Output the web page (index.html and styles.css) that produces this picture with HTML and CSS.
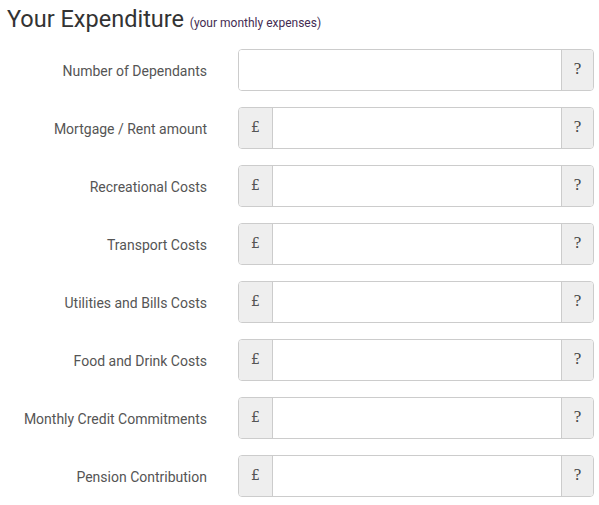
FILE: index.html
```html
<!DOCTYPE html>
<html>
<head>
<meta charset="utf-8">
<link rel="stylesheet" href="styles.css">
</head>
<body>
<div class="page">
  <h2 class="title">Your Expenditure <small class="sub">(your monthly expenses)</small></h2>
  <form class="form">
    <div class="row">
      <label class="label">Number of Dependants</label>
      <div class="group"><input class="field" type="text"><span class="addon help">?</span></div>
    </div>
    <div class="row">
      <label class="label">Mortgage / Rent amount</label>
      <div class="group"><span class="addon cur">£</span><input class="field" type="text"><span class="addon help">?</span></div>
    </div>
    <div class="row">
      <label class="label">Recreational Costs</label>
      <div class="group"><span class="addon cur">£</span><input class="field" type="text"><span class="addon help">?</span></div>
    </div>
    <div class="row">
      <label class="label">Transport Costs</label>
      <div class="group"><span class="addon cur">£</span><input class="field" type="text"><span class="addon help">?</span></div>
    </div>
    <div class="row">
      <label class="label">Utilities and Bills Costs</label>
      <div class="group"><span class="addon cur">£</span><input class="field" type="text"><span class="addon help">?</span></div>
    </div>
    <div class="row">
      <label class="label">Food and Drink Costs</label>
      <div class="group"><span class="addon cur">£</span><input class="field" type="text"><span class="addon help">?</span></div>
    </div>
    <div class="row">
      <label class="label">Monthly Credit Commitments</label>
      <div class="group"><span class="addon cur">£</span><input class="field" type="text"><span class="addon help">?</span></div>
    </div>
    <div class="row">
      <label class="label">Pension Contribution</label>
      <div class="group"><span class="addon cur">£</span><input class="field" type="text"><span class="addon help">?</span></div>
    </div>
  </form>
</div>
</body>
</html>
```
FILE: styles.css
```css
html, body {
  margin: 0;
  padding: 0;
  background: #fff;
}
body {
  font-family: Roboto, "Liberation Sans", sans-serif;
  color: #555;
}
.page {
  padding: 0 5px 0 7px;
}
.title {
  margin: 0;
  padding-top: 4px;
  height: 31px;
  line-height: 31px;
  font-size: 23.5px;
  font-weight: 400;
  color: #333;
  white-space: nowrap;
}
.sub {
  font-size: 12px;
  color: #442c52;
}
.form {
  margin-top: 14px;
  display: flex;
  flex-direction: column;
  gap: 16px;
}
.row {
  display: grid;
  grid-template-columns: 200px 356px;
  column-gap: 31px;
  align-items: center;
  height: 42px;
}
.label {
  text-align: right;
  font-size: 14px;
  color: #555;
  padding-top: 2px;
}
.group {
  display: flex;
  height: 42px;
  box-sizing: border-box;
  border: 1px solid #ccc;
  border-radius: 4px;
  overflow: hidden;
}
.field {
  flex: 1;
  min-width: 0;
  border: 0;
  margin: 0;
  padding: 0 10px;
  background: #fff;
  outline: none;
}
.addon {
  display: flex;
  align-items: center;
  justify-content: center;
  background: #eee;
  font-family: "DejaVu Serif", "Liberation Serif", serif;
  font-size: 14px;
  color: #555;
  padding-bottom: 2px;
  box-sizing: border-box;
}
.cur {
  width: 34px;
  border-right: 1px solid #ccc;
}
.help {
  width: 32px;
  border-left: 1px solid #ccc;
  font-family: "Liberation Serif", serif;
  font-size: 17px;
  color: #444;
}
```
